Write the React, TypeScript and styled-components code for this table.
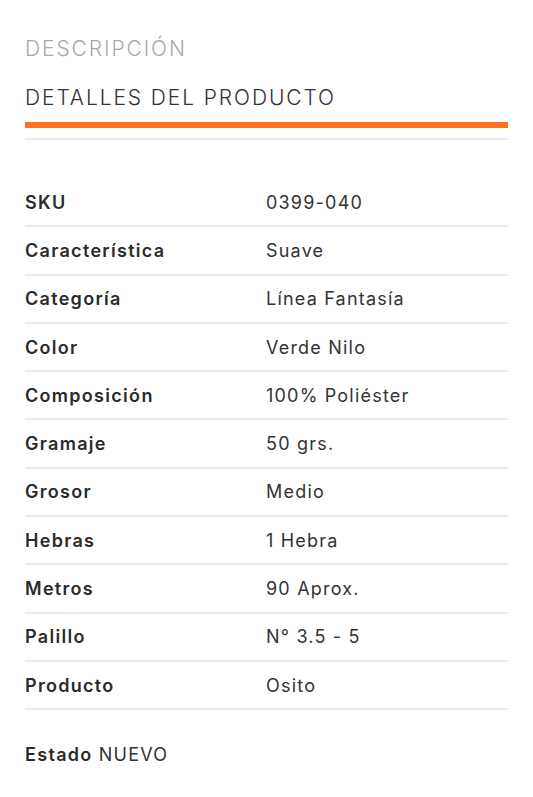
import React from "react";
import styled, { createGlobalStyle } from "styled-components";

const Global = createGlobalStyle`
  html, body { margin: 0; padding: 0; background: #ffffff; }
  body { font-family: Inter, "Open Sans", sans-serif; -webkit-font-smoothing: antialiased; }
`;

const Page = styled.div`
  padding: 0 25px;
  width: 533px;
  box-sizing: border-box;
`;

const Tabs = styled.div`
  display: flex;
  flex-direction: column;
  padding-top: 35px;
`;

const Tab = styled.div<{ $active?: boolean }>`
  font-size: 21px;
  font-weight: 300;
  letter-spacing: 1.9px;
  color: ${(p) => (p.$active ? "#333333" : "#a9a9a9")};
  line-height: 28px;
  ${(p) =>
    p.$active
      ? `margin-top: 21px; padding-bottom: 10px; border-bottom: 6px solid #ff7024;`
      : ``}
`;

const Rule = styled.div`
  height: 2px;
  background: #ececec;
  margin-top: 10px;
`;

const Table = styled.div`
  margin-top: 39px;
  display: flex;
  flex-direction: column;
`;

const Row = styled.div`
  display: grid;
  grid-template-columns: 241px 1fr;
  align-items: center;
  height: 46.3px;
  border-bottom: 2px solid #ececec;
  font-size: 18px;
  color: #2b2b2b;
`;

const Label = styled.div`
  font-weight: 600;
  letter-spacing: 1.3px;
`;

const Value = styled.div`
  font-weight: 400;
  letter-spacing: 1.2px;
  color: #333333;
`;

const Estado = styled.div`
  margin-top: 34px;
  font-size: 18px;
  letter-spacing: 1.2px;
  color: #333333;
  b { font-weight: 600; color: #2b2b2b; letter-spacing: 1.3px; }
`;

const rows: [string, string][] = [
  ["SKU", "0399-040"],
  ["Característica", "Suave"],
  ["Categoría", "Línea Fantasía"],
  ["Color", "Verde Nilo"],
  ["Composición", "100% Poliéster"],
  ["Gramaje", "50 grs."],
  ["Grosor", "Medio"],
  ["Hebras", "1 Hebra"],
  ["Metros", "90 Aprox."],
  ["Palillo", "N° 3.5 - 5"],
  ["Producto", "Osito"],
];

export default function App() {
  return (
    <Page>
      <Global />
      <Tabs>
        <Tab>DESCRIPCIÓN</Tab>
        <Tab $active>DETALLES DEL PRODUCTO</Tab>
      </Tabs>
      <Rule />
      <Table>
        {rows.map(([k, v]) => (
          <Row key={k}>
            <Label>{k}</Label>
            <Value>{v}</Value>
          </Row>
        ))}
      </Table>
      <Estado>
        <b>Estado</b> NUEVO
      </Estado>
    </Page>
  );
}
